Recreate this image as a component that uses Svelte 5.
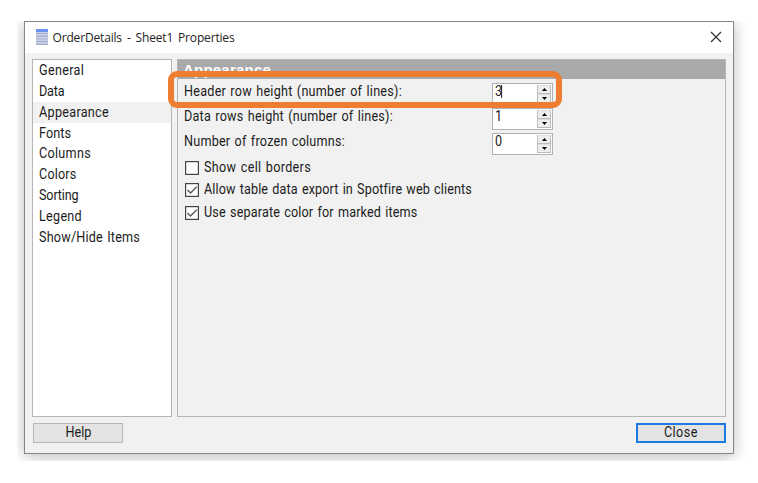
<script>
  const pages = [
    ['General', 45], ['Data', 25.5], ['Appearance', 70], ['Fonts', 32],
    ['Columns', 52], ['Colors', 37.5], ['Sorting', 39.5], ['Legend', 43],
    ['Show/Hide Items', 101]
  ];
  const selected = 'Appearance';
  const numbers = [
    { label: 'Header row height (number of lines):', width: 218, value: 3, caret: true },
    { label: 'Data rows height (number of lines):', width: 209, value: 1 },
    { label: 'Number of frozen columns:', width: 161, value: 0 }
  ];
  const checks = [
    { label: 'Show cell borders', width: 107, on: false },
    { label: 'Allow table data export in Spotfire web clients', width: 267.5, on: true },
    { label: 'Use separate color for marked items', width: 213.5, on: true }
  ];

  // Spreads the letters so that a label takes exactly the given width.
  function fit(node, width) {
    const drawn = node.getBoundingClientRect().width;
    const scale = drawn / node.offsetWidth < 0.96 ? 0.9 : 1;
    node.style.letterSpacing = (width - drawn) / scale / node.textContent.length + 'px';
  }
</script>

<div class="backdrop">
  <div class="window">
    <header>
      <svg class="logo" width="12" height="17" viewBox="0 0 12 17">
        <rect width="12" height="16" fill="#d5daeb" />
        <rect y="0" width="12" height="3" fill="#6c91f5" />
        <path d="M0 4.5h12M0 7.2h12M0 9.9h12M0 12.5h12M0 15.2h12" stroke="#a5aed0" stroke-width="1.4" />
      </svg>
      <span class="title" use:fit={182}>OrderDetails - Sheet1 Properties</span>
      <svg class="close" width="12" height="12" viewBox="0 0 12 12">
        <path d="M1 1L11 11M11 1L1 11" stroke="#333" stroke-width="1.2" fill="none" />
      </svg>
    </header>

    <div class="body">
      <nav>
        {#each pages as [name, width]}
          <div class="page" class:selected={name === selected}><span class="narrow" use:fit={width}>{name}</span></div>
        {/each}
      </nav>
      <main>
        <div class="heading"><span use:fit={88}>Appearance</span></div>
        <div class="numbers">
          {#each numbers as n}
            <div class="number">
              <div class="label"><span class="narrow" use:fit={n.width}>{n.label}</span></div>
              <div class="spin">
                <span class="value" class:caret={n.caret}>{n.value}</span>
                <div class="arrows">
                  <i><svg width="5" height="3" viewBox="0 0 5 3"><path d="M0 3L2.5 0L5 3Z" /></svg></i>
                  <i><svg width="5" height="3" viewBox="0 0 5 3"><path d="M0 0L2.5 3L5 0Z" /></svg></i>
                </div>
              </div>
            </div>
          {/each}
          <div class="highlight"></div>
        </div>
        <div class="checks">
          {#each checks as c}
            <div class="check">
              <svg width="14" height="14" viewBox="0 0 14 14">
                <rect x=".6" y=".6" width="12.8" height="12.8" fill="#fff" stroke="#444" stroke-width="1.2" />
                {#if c.on}<path d="M2.5 7L5.5 10L11.7 3.8" fill="none" stroke="#555" stroke-width="1.3" />{/if}
              </svg>
              <span class="narrow" use:fit={c.width}>{c.label}</span>
            </div>
          {/each}
        </div>
      </main>
    </div>

    <footer>
      <div class="button"><span class="narrow" use:fit={26}>Help</span></div>
      <div class="button primary"><span class="narrow" use:fit={34}>Close</span></div>
    </footer>
  </div>
</div>

<style>
  :global(body) { background: #fff; }
  .backdrop {
    box-sizing: border-box;
    width: 748px;
    height: 461px;
    padding: 21px 14px 7px 24px;
    overflow: hidden;
    clip-path: inset(21px 0 0 17px);
    font: 400 14px/16px Roboto, "Liberation Sans", sans-serif;
    color: #1c1c1c;
  }
  span { white-space: pre; display: inline-block; }
  .narrow { transform: scaleX(.9); transform-origin: left; word-spacing: 1px; }
  .window {
    box-sizing: border-box;
    width: 710px;
    height: 433px;
    display: flex;
    flex-direction: column;
    border: 1px solid #858585;
    background: #f1f1f1;
    box-shadow: 0 2px 14px rgba(0, 0, 0, .28);
  }
  header {
    display: flex;
    align-items: center;
    height: 31px;
    padding: 0 11px 0 11px;
    background: #fff;
  }
  .title { margin-left: 4.5px; font: 12px/16px "Open Sans", sans-serif; word-spacing: 2px; color: #222; }
  .close { margin-left: auto; margin-top: -2px; }
  .body { display: flex; gap: 5px; padding: 6px 7px 0; height: 358px; }
  nav {
    box-sizing: border-box;
    width: 140px;
    border: 1px solid #b5b5b5;
    background: #fff;
  }
  .page { height: 20.85px; padding-left: 6px; line-height: 20px; }
  .page span { vertical-align: top; }
  .selected { background: #f1f1f1; }
  main { box-sizing: border-box; width: 549px; border: 1px solid #b5b5b5; }
  .heading {
    height: 19px;
    padding-left: 5px;
    background: #a9a9a9;
    color: #fff;
    font: bold 15px/20px "Liberation Sans", sans-serif;
  }
  .numbers {
    position: relative;
    display: flex;
    flex-direction: column;
    gap: 3px;
    padding: 4px 0 0 6px;
  }
  .number { display: flex; height: 22px; }
  .label { width: 308px; }
  .spin {
    box-sizing: border-box;
    display: flex;
    justify-content: space-between;
    width: 61px;
    padding: 1px;
    border: 1px solid #b0b0b5;
    background: #fff;
  }
  .value { height: 13px; line-height: 13px; padding: 0 1px; transform: scaleX(.9); transform-origin: left; }
  .caret { border-right: 1px solid #000; padding-right: 0; letter-spacing: -1px; }
  .arrows { display: flex; flex-direction: column; width: 14px; }
  .arrows i {
    box-sizing: border-box;
    display: flex;
    align-items: center;
    justify-content: center;
    height: 9px;
    border: 1px solid #bbb;
    border-top-color: #ddd;
    background: #eee;
  }
  .highlight {
    position: absolute;
    box-sizing: border-box;
    left: -10px;
    top: -8px;
    width: 394px;
    height: 37px;
    border: 6px solid #ed7d31;
    border-radius: 9px;
  }
  .checks { padding: 1px 0 0 7px; }
  .check { display: flex; align-items: center; gap: 5px; height: 22.5px; }
  .check svg { margin-top: 1px; }
  .check span { margin-top: -1px; }
  footer { display: flex; justify-content: space-between; padding: 6px 7px 0 8px; }
  .button {
    box-sizing: border-box;
    width: 90px;
    height: 20px;
    border: 1px solid #b8b8b8;
    background: #e3e3e3;
    text-align: center;
    line-height: 16px;
  }
  .button .narrow { transform-origin: center; }
  .primary { border: 2px solid #1c7be0; line-height: 14px; }
</style>
